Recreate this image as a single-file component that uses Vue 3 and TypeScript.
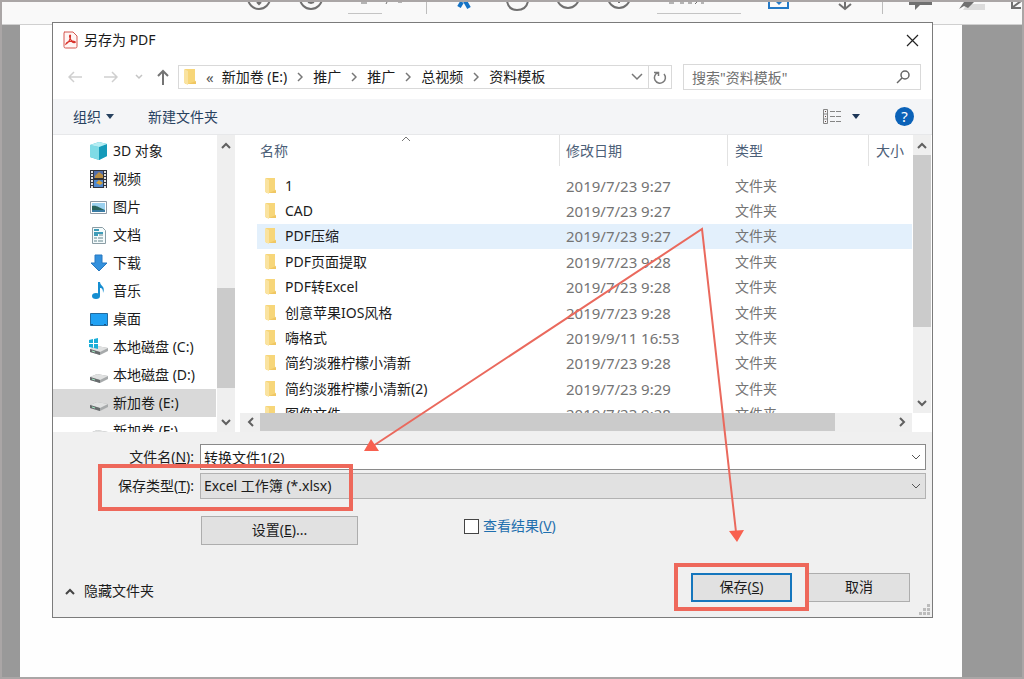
<script setup lang="ts">
import { ref } from 'vue'

interface Place { name: string; icon: string }
interface FileRow { name: string; date: string }

const crumbs = ['新加卷 (E:)', '推广', '推广', '总视频', '资料模板']

const places: Place[] = [
  { name: '3D 对象', icon: 'cube' },
  { name: '视频', icon: 'video' },
  { name: '图片', icon: 'picture' },
  { name: '文档', icon: 'document' },
  { name: '下载', icon: 'download' },
  { name: '音乐', icon: 'music' },
  { name: '桌面', icon: 'desktop' },
  { name: '本地磁盘 (C:)', icon: 'system' },
  { name: '本地磁盘 (D:)', icon: 'drive' },
  { name: '新加卷 (E:)', icon: 'drive' },
  { name: '新加卷 (F:)', icon: 'drive' },
]
const activePlace = ref(9)

const files: FileRow[] = [
  { name: '1', date: '2019/7/23 9:27' },
  { name: 'CAD', date: '2019/7/23 9:27' },
  { name: 'PDF压缩', date: '2019/7/23 9:27' },
  { name: 'PDF页面提取', date: '2019/7/23 9:28' },
  { name: 'PDF转Excel', date: '2019/7/23 9:28' },
  { name: '创意苹果IOS风格', date: '2019/7/23 9:28' },
  { name: '嗨格式', date: '2019/9/11 16:53' },
  { name: '简约淡雅柠檬小清新', date: '2019/7/23 9:28' },
  { name: '简约淡雅柠檬小清新(2)', date: '2019/7/23 9:29' },
  { name: '图像文件', date: '2019/7/23 9:28' },
]
const activeFile = ref(2)

const fileName = ref('转换文件1(2)')
const fileType = ref('xlsx')
const search = ref('')
const viewResult = ref(false)
</script>

<template>
  <div class="viewer">
    <header class="viewer-bar">
      <svg class="viewer-icons" width="1020" height="22" viewBox="2 2 1020 22" fill="none" stroke="#707070" stroke-width="2" aria-hidden="true">
        <circle cx="259" cy="-2" r="11" /><path d="M259 -4v8M257 2l2 2 2-2" />
        <circle cx="311" cy="-2" r="11" /><path d="M308 2l3 1 3-1" />
        <path d="M361 3h6M387 2l-1 2M398 2h4M669 3h5M680 3h4M688 3h4M697 2l-2 2M701 3h3" stroke-width="1" />
        <path d="M348 13.500h34M657 13.500h84" stroke="#c4c4c4" stroke-width="1" />
        <path d="M426.500 2v12M882.500 2v12" stroke="#bdbdbd" stroke-width="1" />
        <path d="M459 7l3-5M465 1l4 7" stroke="#1473c5" stroke-width="4" />
        <path d="M507 1c1 6 4 9 10 9s10-3 11-9" />
        <circle cx="568" cy="-3" r="11" />
        <circle cx="619" cy="-3" r="11" /><path d="M619 -2v5" />
        <path d="M769 0v8h19V0" stroke="#2379c6" /><path d="M776 2h6l-3 3z" fill="#2379c6" stroke="none" />
        <path d="M845 0v9M839 4l6 5 6-5" />
        <path d="M909 2h23v3h-12l-5 5V5h-6z" fill="#707070" stroke="none" />
        <path d="M967 4h18v6h-22z" fill="#dcdcdc" stroke="none" />
        <path d="M959 9l5-7h10l-6 6-4-2z" fill="#707070" stroke="none" />
        <path d="M1012 1v7h9M1013 7l8-6" />
      </svg>
    </header>

    <main class="desk">
      <div class="paper">
        <section class="dialog" aria-labelledby="dialog-title">
          <div class="title-bar">
            <svg width="15" height="18" viewBox="0 0 15 18" fill="none" aria-hidden="true">
              <path d="M1.500 1h8.500l4 4v10.500q0 1.500-1.500 1.500H2.500Q1 17 1 15.500V2q0-1 1-1z" fill="#fff5f4" stroke="#d4574f" />
              <path d="M3 13c2-1 5-5 4.500-8.500C7 3 6 5 7 7c1 3 3 5 5 4.500 1-.8-1-1.500-3-1.300C6 10.500 3.500 11.500 3 13z" stroke="#d8332c" stroke-width="1.200" />
            </svg>
            <h1 id="dialog-title">另存为 PDF</h1>
            <button class="plain close" aria-label="关闭">
              <svg width="13" height="13" viewBox="0 0 13 13" stroke="#222" stroke-width="1.200"><path d="M1 1l11 11M12 1L1 12" /></svg>
            </button>
          </div>

          <nav class="nav-row">
            <div class="history">
              <button class="plain" aria-label="后退"><svg width="14" height="12" viewBox="0 0 14 12" fill="none" stroke="#cfcfcf" stroke-width="1.500"><path d="M14 6H1M6 1L1 6l5 5" /></svg></button>
              <button class="plain" aria-label="前进"><svg width="14" height="12" viewBox="0 0 14 12" fill="none" stroke="#cfcfcf" stroke-width="1.500"><path d="M0 6h13M8 1l5 5-5 5" /></svg></button>
              <button class="plain small" aria-label="最近位置"><svg width="8" height="6" viewBox="0 0 8 6" fill="none" stroke="#c4c4c4" stroke-width="1.500"><path d="M1 1l3 3 3-3" /></svg></button>
              <button class="plain" aria-label="上移"><svg width="12" height="16" viewBox="0 0 12 16" fill="none" stroke="#747474" stroke-width="2"><path d="M6 16V2M1 7l5-5 5 5" /></svg></button>
            </div>
            <div class="address">
              <svg class="folder" width="12" height="16" viewBox="0 0 12 16" aria-hidden="true"><path d="M1 0h10v11l1 4H1z" fill="#f7d679" /><path d="M0 0l4 2v14l-4-2z" fill="#fae3a0" /><path d="M4 15h8v-3z" fill="#f0c763" /></svg>
              <span class="more">«</span>
              <template v-for="(crumb, i) in crumbs" :key="i">
                <svg v-if="i" class="crumb-sep" width="6" height="10" viewBox="0 0 6 10" fill="none" stroke="#777" stroke-width="1.500" aria-hidden="true"><path d="M1 1l4 4-4 4" /></svg>
                <button class="plain crumb">{{ crumb }}</button>
              </template>
              <button class="plain drop" aria-label="历史记录"><svg width="12" height="8" viewBox="0 0 12 8" fill="none" stroke="#777" stroke-width="1.500"><path d="M1 1l5 5 5-5" /></svg></button>
              <button class="plain refresh" aria-label="刷新"><svg width="14" height="15" viewBox="0 0 14 15" fill="none" stroke="#7a7a7a" stroke-width="1.500"><path d="M5 2.500A5.500 5.500 0 1 0 11 4M1 2.500h4.500V6" /></svg></button>
            </div>
            <label class="search">
              <input v-model="search" type="text" placeholder='搜索"资料模板"' aria-label="搜索" />
              <svg width="14" height="14" viewBox="0 0 14 14" fill="none" stroke="#666" stroke-width="1.500" aria-hidden="true"><circle cx="9" cy="5" r="4" /><path d="M6 8l-5 5" /></svg>
            </label>
          </nav>

          <div class="command-bar">
            <button class="plain">组织<svg width="8" height="5" viewBox="0 0 8 5" aria-hidden="true"><path d="M0 0h8L4 5z" fill="#27415f" /></svg></button>
            <button class="plain">新建文件夹</button>
            <button class="plain views" aria-label="更改视图">
              <svg width="18" height="15" viewBox="0 0 18 15" fill="none" stroke="#858585"><path d="M.5.5h4v14h-4zM.5 5h4M.5 10h4M7 2.500h5M13 2.500h5M7 7.500h5M13 7.500h5M7 12.500h5M13 12.500h5" /><path d="M2 2.500h1M2 7.500h1M2 12.500h1" stroke="#6b4a42" /></svg>
              <svg width="8" height="5" viewBox="0 0 8 5"><path d="M0 0h8L4 5z" fill="#1c3557" /></svg>
            </button>
            <button class="help" aria-label="帮助">?</button>
          </div>

          <div class="browser">
            <ul class="places">
              <li v-for="(place, i) in places" :key="place.name">
                <button class="plain place" :class="{ active: i === activePlace }" @click="activePlace = i">
                  <svg width="20" height="20" viewBox="0 0 20 20" fill="none" aria-hidden="true">
                    <g v-if="place.icon === 'cube'"><path d="M1 4l9-3 8 2v12l-8 4-9-3z" fill="#36b7cf" /><path d="M1 4l9 2v13l-9-3z" fill="#7fdbe6" /><path d="M10 6l8-3v12l-8 4z" fill="#159ab9" /><path d="M1 4l9-3 8 2-8 3z" fill="#b5edf2" /></g>
                    <g v-else-if="place.icon === 'video'"><path d="M1 1h17v18H1z" fill="#30343e" /><path d="M5 2h9v7H5z" fill="#516fae" /><path d="M5 11h9v7H5z" fill="#4d88d1" /><path d="M6 7l4-4 4 3v3H6z" fill="#bc8e42" /><path d="M7 14l3-3 4 3-3 2z" fill="#d5a13b" /><path d="M3 2v17M16 2v17" stroke="#e5e5e5" stroke-width="2" stroke-dasharray="2 1" /></g>
                    <g v-else-if="place.icon === 'picture'"><path d="M1.500 4.500h16v12h-16z" fill="#fff" stroke="#8f9ba6" /><path d="M3 6h13v9H3z" fill="#9bd1ef" /><path d="M3 9c5-1 7 2 13 4v2H3z" fill="#28635c" /><path d="M3 13h13v2H3z" fill="#397ca4" /></g>
                    <g v-else-if="place.icon === 'document'"><path d="M3.500 2.500h10l3 3v13h-13z" fill="#f4fbfc" stroke="#8b9da5" /><path d="M5 5h5M5 8h9M5 10h4" stroke="#3f9cb8" stroke-width="2" /><path d="M10 10h4M5 13h3M9 13h5M5 16h3M9 16h5" stroke="#65858d" /></g>
                    <path v-else-if="place.icon === 'download'" d="M6 2h7v8h5l-8 8-8-8h4z" fill="#3491dd" stroke="#2679c1" />
                    <g v-else-if="place.icon === 'music'"><ellipse cx="7" cy="15" rx="4" ry="3" fill="#168ed1" /><path d="M9 15V1h2c0 4 6 4 3 11 0-4-1-5-3-5v8z" fill="#168ed1" /></g>
                    <g v-else-if="place.icon === 'desktop'"><path d="M1.500 4.500h17v12h-17z" fill="#20a1f3" stroke="#236b9f" /><path d="M2 15.500h16" stroke="#155488" stroke-dasharray="2 11" /></g>
                    <g v-else>
                      <path d="M1 12l7-3 11 2v3l-8 4-10-3z" fill="#a7aaab" /><path d="M1 12l7-3 11 2-8 4z" fill="#e0e1e1" /><path d="M1 12l10 3v3L1 15z" fill="#676b6d" /><path d="M3 14l3 1" stroke="#9de5be" />
                      <path v-if="place.icon === 'system'" d="M0 3l4-1v4H0zM5 2l4-1v5H5zM0 7h4v4l-4-1zM5 7h4v5l-4-1z" fill="#1aaed8" />
                    </g>
                  </svg>
                  {{ place.name }}
                </button>
              </li>
            </ul>
            <div class="v-scroll side-scroll">
              <button class="plain" aria-label="向上滚动"><svg width="10" height="7" viewBox="0 0 10 7" fill="none" stroke="#606060" stroke-width="2"><path d="M1 6l4-4 4 4" /></svg></button>
              <div class="track"><div class="thumb"></div></div>
              <button class="plain" aria-label="向下滚动"><svg width="10" height="7" viewBox="0 0 10 7" fill="none" stroke="#606060" stroke-width="2"><path d="M1 1l4 4 4-4" /></svg></button>
            </div>

            <div class="list">
              <div class="table-clip">
                <table>
                  <colgroup><col /><col class="c-date" /><col class="c-type" /><col class="c-size" /></colgroup>
                  <thead>
                    <tr>
                      <th scope="col">名称<svg class="sort" width="10" height="6" viewBox="0 0 10 6" fill="none" stroke="#777" aria-hidden="true"><path d="M1 5l4-4 4 4" /></svg></th>
                      <th scope="col">修改日期</th>
                      <th scope="col">类型</th>
                      <th scope="col">大小</th>
                    </tr>
                    <tr class="spacer" aria-hidden="true"><td colspan="4"></td></tr>
                  </thead>
                  <tbody>
                    <tr v-for="(file, i) in files" :key="file.name" :class="{ active: i === activeFile }" @click="activeFile = i">
                      <td>
                        <div class="file">
                          <svg width="12" height="16" viewBox="0 0 12 16" aria-hidden="true"><path d="M1 0h9v11l1 4H1z" fill="#f7d679" /><path d="M0 0l4 2v14l-4-2z" fill="#fae3a0" /><path d="M4 15h7v-3z" fill="#f0c763" /></svg>
                          {{ file.name }}
                        </div>
                      </td>
                      <td class="date">{{ file.date }}</td>
                      <td>文件夹</td>
                      <td></td>
                    </tr>
                  </tbody>
                </table>
              </div>
              <div class="v-scroll list-scroll">
                <button class="plain" aria-label="向上滚动"><svg width="10" height="7" viewBox="0 0 10 7" fill="none" stroke="#606060" stroke-width="2"><path d="M1 6l4-4 4 4" /></svg></button>
                <div class="track"><div class="thumb"></div></div>
                <button class="plain" aria-label="向下滚动"><svg width="10" height="7" viewBox="0 0 10 7" fill="none" stroke="#606060" stroke-width="2"><path d="M1 1l4 4 4-4" /></svg></button>
              </div>
              <div class="h-scroll">
                <button class="plain" aria-label="向左滚动"><svg width="7" height="10" viewBox="0 0 7 10" fill="none" stroke="#606060" stroke-width="2"><path d="M6 1L2 5l4 4" /></svg></button>
                <div class="track"><div class="thumb"></div></div>
                <button class="plain" aria-label="向右滚动"><svg width="7" height="10" viewBox="0 0 7 10" fill="none" stroke="#606060" stroke-width="2"><path d="M1 1l4 4-4 4" /></svg></button>
              </div>
            </div>
          </div>

          <form class="form" @submit.prevent>
            <div class="fields">
              <label for="file-name">文件名(<u>N</u>):</label>
              <div class="field">
                <input id="file-name" v-model="fileName" type="text" />
                <svg width="10" height="7" viewBox="0 0 10 7" fill="none" stroke="#555" aria-hidden="true"><path d="M1 1l4 4 4-4" /></svg>
              </div>
              <label for="file-type">保存类型(<u>T</u>):</label>
              <div class="field">
                <select id="file-type" v-model="fileType"><option value="xlsx">Excel 工作簿 (*.xlsx)</option></select>
                <svg width="10" height="7" viewBox="0 0 10 7" fill="none" stroke="#555" aria-hidden="true"><path d="M1 1l4 4 4-4" /></svg>
              </div>
            </div>
            <div class="options">
              <button type="button" class="btn settings">设置(<u>E</u>)...</button>
              <label class="check"><input v-model="viewResult" type="checkbox" /><span>查看结果(<u>V</u>)</span></label>
            </div>
            <div class="actions">
              <button type="button" class="plain hide">
                <svg width="10" height="7" viewBox="0 0 10 7" fill="none" stroke="#444" stroke-width="2" aria-hidden="true"><path d="M1 6l4-4 4 4" /></svg>隐藏文件夹
              </button>
              <button type="submit" class="btn save">保存(<u>S</u>)</button>
              <button type="button" class="btn cancel">取消</button>
            </div>
            <svg class="grip" width="11" height="11" viewBox="0 0 11 11" fill="#bcbcbc" aria-hidden="true"><path d="M8 0h3v3H8zM4 4h3v3H4zM8 4h3v3H8zM0 8h3v3H0zM4 8h3v3H4zM8 8h3v3H8z" /></svg>
          </form>

          <div class="mark mark-type"></div>
          <div class="mark mark-save"></div>
          <svg class="arrows" width="400" height="340" viewBox="360 220 400 340" fill="none" stroke="#ea695d" stroke-width="2" aria-hidden="true">
            <path d="M373 446L702 229l34 303" />
            <path d="M364 451l7-12 8 12zM729 531l15-1-7 12z" fill="#f8604f" stroke="none" />
          </svg>
        </section>
      </div>
    </main>
  </div>
</template>

<style>
body { margin: 0; }
</style>

<style scoped>
* { box-sizing: border-box; }
.viewer {
  min-height: 100vh;
  display: flex;
  flex-direction: column;
  border: 2px solid #aaa6a6;
  background: #999;
  color: #1b1b1b;
  font: 14px/20px "Noto Sans", "Noto Sans CJK SC", sans-serif;
}
.viewer-bar { height: 23px; overflow: hidden; background: #f9f9f9; border-bottom: 1px solid #d0d0d0; }
.viewer-icons { display: block; }
.desk { flex: 1; display: flex; padding: 0 60px 0 18px; }
.paper { flex: 1; min-width: 0; background: #fefefe; padding: 0 29px 59px 32px; }
.dialog { position: relative; margin-top: -3px; border: 1px solid #7b7b7b; background: #fff; }

button, input, select { font: inherit; color: inherit; margin: 0; }
.plain { display: flex; align-items: center; justify-content: center; padding: 0; border: 0; background: none; white-space: nowrap; }
svg { flex: none; }

.title-bar { height: 34px; display: flex; align-items: center; padding: 0 13px 0 10px; }
h1 { flex: 1; margin: 0 0 0 6px; font-size: 14px; font-weight: 400; }

.nav-row { height: 42px; display: flex; align-items: flex-start; padding: 7px 11px 0 15px; }
.history { display: flex; align-items: center; height: 26px; width: 110px; gap: 22px; }
.history .small { margin: 0 -8px 0 -5px; }
.address { flex: 1; height: 24px; margin-top: 1px; display: flex; align-items: center; border: 1px solid #d9d9d9; padding-left: 5px; }
.more { margin: 0 8px 0 10px; color: #555; font-size: 15px; }
.crumb-sep { margin: 0 10px; }
.drop { margin-left: auto; width: 22px; height: 22px; }
.refresh { width: 23px; height: 22px; border-left: 1px solid #d9d9d9; }
.search { width: 238px; height: 26px; margin-left: 11px; display: flex; align-items: center; border: 1px solid #d9d9d9; padding: 0 10px 0 8px; }
.search input { flex: 1; min-width: 0; height: 22px; border: 0; padding: 0; outline: 0; background: none; }
.search input::placeholder { color: #717171; opacity: 1; }

.command-bar { height: 36px; display: flex; align-items: center; padding: 0 18px 0 20px; background: #f4f5f7; border-bottom: 1px solid #e7e8ea; color: #27415f; }
.command-bar .plain svg + svg { margin-left: 11px; }
.command-bar .plain:first-child svg { margin-left: 5px; }
.command-bar .plain:nth-child(2) { margin-left: 34px; }
.command-bar .views { margin-left: auto; }
.help { width: 19px; height: 19px; margin-left: 35px; padding: 0; border: 0; border-radius: 50%; background: #0b62b8; color: #fff; font-size: 15px; line-height: 19px; }

.browser { display: flex; height: 297px; }
.places { width: 164px; margin: 0; padding: 2px 1px 0 0; list-style: none; overflow: hidden; }
.place { width: 100%; height: 28px; justify-content: flex-start; gap: 4px; padding-left: 36px; }
.place.active { background: #d9d9d9; }

.v-scroll { width: 18px; display: flex; flex-direction: column; background: #efefef; }
.v-scroll .plain { height: 20px; width: 18px; }
.track { flex: 1; }
.thumb { background: #cbcbcb; }
.side-scroll .track { padding-top: 133px; }
.side-scroll .thumb { height: 100px; }
.list { flex: 1; min-width: 0; margin-left: 5px; display: grid; grid-template-columns: minmax(0, 1fr) 19px; grid-template-rows: 278px 19px; column-gap: 1px; }
.list-scroll .thumb { height: 172px; }
.h-scroll { display: flex; background: #efefef; }
.h-scroll .plain { width: 20px; height: 18px; }
.h-scroll .thumb { width: 91%; height: 18px; }

.table-clip { overflow: hidden; padding-left: 17px; }
table { width: 100%; height: 292px; table-layout: fixed; border-collapse: separate; border-spacing: 0; color: #747474; }
.c-date { width: 168px; }
.c-type { width: 141px; }
.c-size { width: 43px; }
th { position: relative; height: 31px; padding: 0 0 0 7px; text-align: left; font-weight: 400; color: #4c6078; border-right: 1px solid #e2e2e2; white-space: nowrap; }
th:first-child { padding-left: 3px; }
th:nth-child(2) { padding-left: 6px; }
th:last-child { border-right: 0; }
.sort { position: absolute; top: 1px; left: calc(50% - 7px); }
.spacer td { height: 7px; padding: 0; }
tbody td { padding: 0 0 0 7px; line-height: 24px; white-space: nowrap; }
tbody td:first-child { padding-left: 8px; color: #1b1b1b; }
tbody .date { font-size: 15px; padding-left: 6px; }
tbody tr.active { background: #e3f0fc; }
.file { display: flex; align-items: center; gap: 8px; }

.form { position: relative; height: 185px; padding: 12px 6px 0 12px; background: #f0f0f0; }
.fields { display: grid; grid-template-columns: 129px minmax(0, 1fr); gap: 3px 6px; align-items: center; }
.fields label { text-align: right; white-space: nowrap; }
.field { position: relative; }
.field input, .field select { display: block; width: 100%; height: 26px; padding: 0 20px 0 3px; border: 1px solid #8a8a8a; border-radius: 0; background: #fff; appearance: none; outline: 0; }
.field select { background: #e1e1e1; border-color: #b2b2b2; }
.field svg { position: absolute; right: 5px; top: 10px; pointer-events: none; }
.btn { padding: 0 0 1px; border: 1px solid #adadad; background: #e1e1e1; height: 29px; border-radius: 0; }
.options { display: flex; align-items: flex-start; margin: 17px 0 0 136px; }
.settings { width: 157px; }
.check { display: flex; align-items: center; gap: 4px; margin-left: 106px; color: #1f6fae; }
.check input { appearance: none; width: 15px; height: 15px; border: 1px solid #444; background: #fff; }
.check input:checked { background: #1f6fae; }
.actions { display: flex; align-items: center; margin: 28px 16px 0 0; }
.hide { gap: 9px; margin-top: 7px; }
.save { width: 101px; margin-left: auto; border: 2px solid #1576bd; }
.cancel { width: 102px; margin-left: 16px; }
.grip { position: absolute; right: 2px; bottom: 2px; }

.mark { position: absolute; border: 4px solid #ee685b; pointer-events: none; }
.mark-type { left: 45px; top: 441px; width: 255px; height: 47px; }
.mark-save { right: 123px; bottom: 6px; width: 135px; height: 48px; }
.arrows { position: absolute; left: 307px; top: 197px; pointer-events: none; }
</style>
